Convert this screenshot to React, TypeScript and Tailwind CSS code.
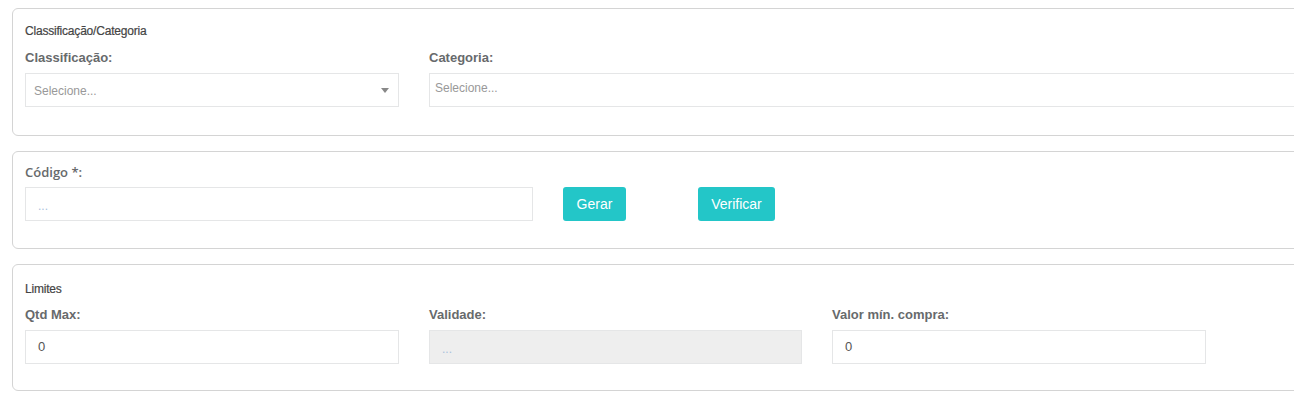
import React from "react";

const sans = "font-['Liberation_Sans',Arial,sans-serif]";

function Label({ children, className = "" }: { children: React.ReactNode; className?: string }) {
  return (
    <div className={`${sans} text-[13px] leading-[16px] font-bold text-[#676a6c] mb-[7px] ${className}`}>
      {children}
    </div>
  );
}

function SectionTitle({ children, className = "" }: { children: React.ReactNode; className?: string }) {
  return (
    <div
      className={`${sans} text-[12px] leading-[16px] text-[#444] tracking-[-0.2px] [-webkit-text-stroke:0.2px_#444] ${className}`}
    >
      {children}
    </div>
  );
}

function Card({ className = "", children }: { className?: string; children: React.ReactNode }) {
  return (
    <div className={`border border-[#d4d4d4] rounded-[6px] bg-white pl-[12px] ${className}`}>{children}</div>
  );
}

export default function App() {
  return (
    <div className="w-full h-[401px] overflow-hidden bg-white">
      <div className="w-[1400px] pl-[12px] pt-[8px] flex flex-col gap-[15px]">
        {/* Classificação / Categoria */}
        <Card className="pt-[14px] pb-[28px]">
          <SectionTitle className="mb-[11px]">Classificação/Categoria</SectionTitle>
          <div className="flex gap-[30px]">
            <div className="w-[374px]">
              <Label>Classificação:</Label>
              <div className="h-[34px] border border-[#e5e6e7] flex items-center justify-between pl-[8px] pr-[9px]">
                <span className={`${sans} text-[12px] text-[#999] pt-[2px]`}>Selecione...</span>
                <svg width="8" height="5" viewBox="0 0 8 5">
                  <path d="M0 0 L8 0 L4 5 Z" fill="#888" />
                </svg>
              </div>
            </div>
            <div className="flex-1">
              <Label>Categoria:</Label>
              <div className="h-[34px] border border-[#e5e6e7] flex items-start pt-[5px] pl-[5px]">
                <span className={`${sans} text-[12px] text-[#999]`}>Selecione...</span>
              </div>
            </div>
          </div>
        </Card>

        {/* Código */}
        <Card className="pt-[12px] pb-[27px]">
          <div className="font-['Open_Sans',sans-serif] text-[13px] leading-[16px] font-semibold text-[#676a6c] mb-[7px]">
            Código *:
          </div>
          <div className="flex items-center">
            <div className="w-[508px] h-[34px] border border-[#e5e6e7] flex items-center pl-[12px] pt-[3px]">
              <span className={`${sans} text-[12px] text-[#a9c1dc]`}>...</span>
            </div>
            <button className={`${sans} ml-[30px] h-[34px] w-[63px] rounded-[3px] bg-[#23c6c8] text-white text-[14px]`}>
              Gerar
            </button>
            <button className={`${sans} ml-[72px] h-[34px] w-[77px] rounded-[3px] bg-[#23c6c8] text-white text-[14px]`}>
              Verificar
            </button>
          </div>
        </Card>

        {/* Limites */}
        <Card className="pt-[16px] pb-[26px]">
          <SectionTitle className="mb-[10px]">Limites</SectionTitle>
          <div className="grid grid-cols-[374px_373px_374px] gap-x-[30px]">
            <div>
              <Label>Qtd Max:</Label>
              <div className="h-[34px] border border-[#e5e6e7] flex items-center pl-[12px]">
                <span className={`${sans} text-[13px] text-[#555]`}>0</span>
              </div>
            </div>
            <div>
              <Label>Validade:</Label>
              <div className="h-[34px] border border-[#e5e6e7] bg-[#eeeeee] flex items-center pl-[12px] pt-[3px]">
                <span className={`${sans} text-[12px] text-[#a9c1dc]`}>...</span>
              </div>
            </div>
            <div>
              <Label>Valor mín. compra:</Label>
              <div className="h-[34px] border border-[#e5e6e7] flex items-center pl-[12px]">
                <span className={`${sans} text-[13px] text-[#555]`}>0</span>
              </div>
            </div>
          </div>
        </Card>
      </div>
    </div>
  );
}
